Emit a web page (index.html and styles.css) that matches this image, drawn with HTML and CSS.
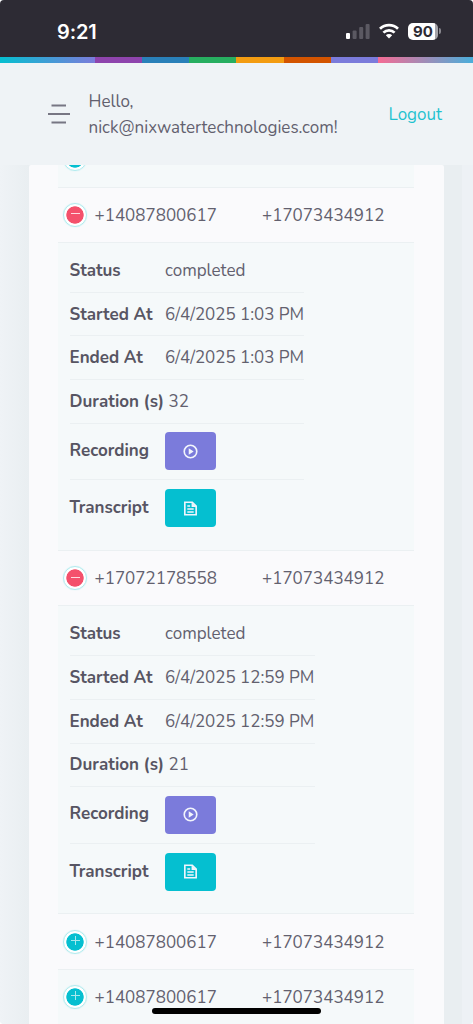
FILE: index.html
```html
<!DOCTYPE html>
<html lang="en">
<head>
<meta charset="utf-8">
<title>Calls</title>
<link rel="stylesheet" href="styles.css">
</head>
<body>
<svg class="defs" width="0" height="0">
  <symbol id="play" viewBox="0 0 24 24"><path fill="currentColor" d="M12 2a10 10 0 1 0 0 20 10 10 0 0 0 0-20zm0 17.700a7.700 7.700 0 1 1 0-15.400 7.700 7.700 0 0 1 0 15.400zm-2.500-3.200l7-4.500-7-4.500z"/></symbol>
  <symbol id="doc" viewBox="0 0 24 24"><path fill="none" stroke="currentColor" stroke-width="2.300" d="M4 3.200h10.500l5.500 5.500v12.100H4zM7.500 8.500h4M7.500 12.700h9M7.500 16.900h9"/><path fill="currentColor" d="M13.500 3l7 7h-7z"/></symbol>
</svg>
<div class="screen">
  <div class="status-bar">
    <span class="clock">9:21</span>
    <div class="indicators">
      <svg width="25" height="17" viewBox="0 0 25 17"><rect x="0" y="10" width="4" height="6" rx="1" fill="#fff"/><g fill="#5b5962"><rect x="6.600" y="7.500" width="4" height="8.500" rx="1"/><rect x="13.200" y="4" width="4" height="12" rx="1"/><rect x="19.600" y="1" width="4" height="15" rx="1"/></g></svg>
      <svg class="wifi" width="20" height="16" viewBox="0 0 20 16"><g fill="none" stroke="#fff" stroke-width="2.700"><path d="M1 5.800a12.800 12.800 0 0 1 18 0"/><path d="M4.400 9.600a8 8 0 0 1 11.200 0"/></g><path fill="#fff" d="M6.800 12.300a4.600 4.600 0 0 1 6.400 0L10 15.500z"/></svg>
      <div class="battery"><span class="level">90</span><span class="cap"></span></div>
    </div>
  </div>
  <div class="stripe"></div>
  <header class="header">
    <svg class="menu" width="22" height="20" viewBox="0 0 22 20"><path d="M3.500 1.500h14.500M0 10h22M3.500 18.500h14.500" stroke="#777683" stroke-width="2.200"/></svg>
    <div class="hello">Hello,<br><span class="email">nick@nixwatertechnologies.com!</span></div>
    <a class="logout">Logout</a>
  </header>
  <main class="content">
    <div class="card">
      <div class="table">
        <div class="call shaded"><span class="toggle"><i class="plus"></i></span><span class="phone"></span><span class="phone"></span></div>
        <div class="call"><span class="toggle open"><i class="minus"></i></span><span class="phone">+14087800617</span><span class="phone">+17073434912</span></div>
        <div class="details">
          <div class="fields">
            <div class="field"><b>Status</b><span>completed</span></div>
            <div class="field"><b>Started At</b><span class="date">6/4/2025 1:03 PM</span></div>
            <div class="field"><b>Ended At</b><span class="date">6/4/2025 1:03 PM</span></div>
            <div class="field"><b>Duration (s)</b><span>32</span></div>
            <div class="field tall"><b>Recording</b><button class="btn violet"><svg width="17" height="17"><use href="#play"/></svg></button></div>
            <div class="field tall"><b>Transcript</b><button class="btn teal"><svg width="17" height="17"><use href="#doc"/></svg></button></div>
          </div>
        </div>
        <div class="call"><span class="toggle open"><i class="minus"></i></span><span class="phone">+17072178558</span><span class="phone">+17073434912</span></div>
        <div class="details">
          <div class="fields wide">
            <div class="field"><b>Status</b><span>completed</span></div>
            <div class="field"><b>Started At</b><span class="date">6/4/2025 12:59 PM</span></div>
            <div class="field"><b>Ended At</b><span class="date">6/4/2025 12:59 PM</span></div>
            <div class="field"><b>Duration (s)</b><span>21</span></div>
            <div class="field tall"><b>Recording</b><button class="btn violet"><svg width="17" height="17"><use href="#play"/></svg></button></div>
            <div class="field tall"><b>Transcript</b><button class="btn teal"><svg width="17" height="17"><use href="#doc"/></svg></button></div>
          </div>
        </div>
        <div class="call"><span class="toggle"><i class="plus"></i></span><span class="phone">+14087800617</span><span class="phone">+17073434912</span></div>
        <div class="call shaded"><span class="toggle"><i class="plus"></i></span><span class="phone">+14087800617</span><span class="phone">+17073434912</span></div>
      </div>
    </div>
  </main>
  <div class="home-bar"></div>
</div>
</body>
</html>
```
FILE: styles.css
```css
* { box-sizing: border-box; }
body { margin: 0; font-family: Nunito, Lato, "Noto Sans", sans-serif; font-size: 17px; color: #62606e; background: #fff; }
.defs { position: absolute; }
.screen { position: relative; width: 473px; height: 1024px; overflow: hidden; display: flex; flex-direction: column; background: #eff3f6; border-radius: 4px; }
.status-bar { height: 57px; flex: none; background: #2d2b34; display: flex; justify-content: space-between; padding: 0 32px 0 57px; align-items: center; }
.clock { font: 600 20px/24px Inter, sans-serif; color: #fff; letter-spacing: -0.100px; padding-top: 6px; }
.indicators { display: flex; align-items: center; padding-top: 5px; }
.wifi { margin-left: 8px; }
.battery { display: flex; align-items: center; margin-left: 9px; }
.level { width: 30px; height: 17px; border-radius: 5px; background: linear-gradient(90deg, #fff 27px, #a5a4aa 27px); color: #2d2b34; font: 700 15px/17px Inter, sans-serif; text-align: center; }
.cap { width: 2px; height: 6px; margin-left: 1px; border-radius: 0 2px 2px 0; background: #89888f; }
.stripe { height: 6px; flex: none; background:
  linear-gradient(90deg, #05bfd0, #7b7bdb) 0 0 / 95px 100% no-repeat,
  linear-gradient(90deg, #f56b94, #49aedb) 378px 0 / 95px 100% no-repeat,
  linear-gradient(90deg, #8e44ad 142px, #2980b9 142px 189px, #27ae60 189px 236px, #f39c12 236px 284px, #d35400 284px 331px, #7b7bdb 331px); }
.header { height: 102px; flex: none; display: flex; align-items: center; padding: 0 31px 0 48px; }
.hello { margin-left: 18.500px; line-height: 26px; flex: 1; padding-top: 1px; }
.email { white-space: nowrap; }
.logout { color: #1fc2cf; }
.content { flex: 1; min-height: 0; overflow: hidden; padding: 0 29px; background: linear-gradient(90deg, #eff3f6 0, #e9eef1 29px, #e9eef1 462px, #edf1f5 462px); }
.card { height: 860px; background: #fafafc; padding: 0 30px 0 29px; border-radius: 2px 2px 0 0; overflow: hidden; }
.table { margin-top: -32.800px; }
.call { height: 55.300px; display: flex; align-items: center; border-bottom: 1px solid #ebf0f2; padding-left: 5px; }
.shaded, .details { background: #f5f9fa; }
.toggle { width: 24px; height: 24px; flex: none; border-radius: 50%; border: 1.500px solid #b0ebee; background: radial-gradient(circle, #05bfd0 8.300px, #fff 9px); box-shadow: 0 0 1px #b0ebee; display: flex; justify-content: center; padding-top: 5.500px; }
.open { background: radial-gradient(circle, #f4516c 8.300px, #fff 9px); }
.plus, .minus { width: 9px; height: 9px; }
.plus { background: linear-gradient(#a8e8ed, #a8e8ed) 0 4px / 9px 1px no-repeat, linear-gradient(#a8e8ed, #a8e8ed) 4px 0 / 1px 9px no-repeat; }
.minus { background: linear-gradient(#ffdbe1, #ffdbe1) 0 4px / 9px 1px no-repeat; }
.phone { width: 167.500px; margin-left: 7.500px; margin-right: -7.500px; flex: none; white-space: nowrap; padding-top: 1px; }
.details { height: 308.200px; border-bottom: 1px solid #ebf0f2; padding: 6.300px 12px 0 11.500px; }
.fields { width: 234.500px; }
.wide { width: 245.500px; }
.field { height: 43.650px; display: flex; align-items: center; gap: 4.500px; border-bottom: 1px solid #ebf0f2; white-space: nowrap; }
.field b { min-width: 91px; color: #575563; }
.tall { height: 56.600px; }
.tall b { padding-bottom: 2px; }
.field:last-child { border-bottom: 0; }
.field:last-child .btn { margin-top: -1px; }
.date { letter-spacing: -0.020px; }
.btn { width: 51px; height: 38px; padding: 0; border: 0; border-radius: 4px; display: flex; align-items: center; justify-content: center; color: #f2f5fc; }
.violet { background: #7b7bdb; }
.teal { background: #05bfd0; }
.home-bar { position: absolute; left: 152px; bottom: 10px; width: 169px; height: 6px; border-radius: 3px; background: #000; }
```
